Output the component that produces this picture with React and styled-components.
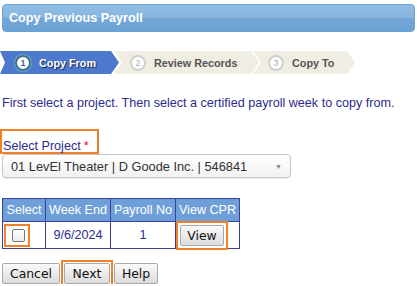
import React from "react";
import styled, { createGlobalStyle } from "styled-components";

const GlobalStyle = createGlobalStyle`
  body {
    margin: 0;
    background: #fff;
    font-family: "Liberation Sans", Arial, sans-serif;
  }
`;

const ORANGE = "#f0802a";
const NAVY = "#2c2c8e";

const Page = styled.div`
  padding: 4px 2px 0 2px;
`;

const Header = styled.div`
  height: 28px;
  box-sizing: border-box;
  display: flex;
  align-items: center;
  padding-left: 6px;
  border: 1px solid #6aa1d6;
  border-radius: 4px;
  background: linear-gradient(#91bde3 0%, #88b6df 48%, #74a7d7 52%, #6da2d4 100%);
  color: #fff;
  font-weight: bold;
  font-size: 12.6px;
`;

const Steps = styled.div`
  display: flex;
  height: 23px;
  margin: 19px 0 0 -2px;
`;

const Step = styled.div`
  width: ${p => p.$w}px;
  margin-left: ${p => p.$shift}px;
  display: flex;
  align-items: center;
  box-sizing: border-box;
  padding-left: ${p => p.$pad}px;
  gap: 8px;
  background: ${p => (p.$active ? "#4c79cd" : "#f0ede3")};
  clip-path: polygon(
    0 0,
    calc(100% - 8px) 0,
    100% 50%,
    calc(100% - 8px) 100%,
    0 100%,
    ${p => p.$notch}px 50%
  );
  font-size: 10.8px;
  font-weight: bold;
  color: ${p => (p.$active ? "#fff" : "#555")};
  text-shadow: ${p => (p.$active ? "1px 1px 1px #1d2b4d" : "none")};
`;

const Num = styled.span`
  width: 16px;
  height: 16px;
  box-sizing: border-box;
  border-radius: 50%;
  display: flex;
  align-items: center;
  justify-content: center;
  background: #fff;
  font-size: 9px;
  font-weight: ${p => (p.$active ? "bold" : "normal")};
  text-shadow: none;
  border: 2px solid ${p => (p.$active ? "#3f6f86" : "#cfcfcf")};
  color: ${p => (p.$active ? "#3a5cb8" : "#aaa")};
  box-shadow: ${p => (p.$active ? "0 0 2px #9fd" : "none")};
`;

const Intro = styled.p`
  margin: 22px 0 0;
  font-size: 12.6px;
  line-height: 15px;
  color: ${NAVY};
`;

const Label = styled.div`
  display: inline-block;
  margin: 18px 0 0 -2px;
  box-sizing: border-box;
  width: 99px;
  height: 25px;
  padding: 8px 0 0 1px;
  border: 2px solid ${ORANGE};
  font-size: 12.6px;
  line-height: 15px;
  color: ${NAVY};

  span {
    color: #e02020;
    margin-left: 3px;
  }
`;

const Dropdown = styled.div`
  width: 289px;
  height: 24px;
  box-sizing: border-box;
  display: flex;
  align-items: center;
  justify-content: space-between;
  padding: 0 8px 0 8px;
  border: 1px solid #c6c6c6;
  border-radius: 4px;
  background: linear-gradient(#fff, #f1f1f1);
  box-shadow: 0 1px 1px rgba(0, 0, 0, 0.08);
  font-size: 12.8px;
  color: #333;

  i {
    font-style: normal;
    font-size: 7px;
    color: #888;
  }
`;

const Table = styled.table`
  margin-top: 20px;
  border-collapse: collapse;
  border: 1px solid #3d3f9d;
  font-size: 12.6px;
`;

const Th = styled.th`
  width: ${p => p.$w}px;
  height: 22px;
  padding: 0;
  background: #6f9fd8;
  color: #fff;
  font-weight: normal;
  border: 1px solid #3d3f9d;
  border-left-color: #c8d8ee;
  &:first-child {
    border-left-color: #3d3f9d;
  }
`;

const Td = styled.td`
  height: 26px;
  padding: 0 0 0 ${p => p.$indent || 0}px;
  border: 1px solid #3d3f9d;
  color: ${NAVY};
  text-align: ${p => p.$align || "center"};
`;

// square orange box drawn around a control (no radius, so it stays square)
const Mark = styled.span`
  display: inline-flex;
  vertical-align: middle;
  outline: 2px solid ${ORANGE};
  outline-offset: ${p => p.$offset ?? 1}px;
`;

const CheckMark = styled.span`
  display: flex;
  width: 26px;
  height: 23px;
  box-sizing: border-box;
  align-items: center;
  padding-left: 6px;
  margin-left: 1px;
  border: 2px solid ${ORANGE};
`;

const Check = styled.input.attrs({ type: "checkbox" })`
  appearance: none;
  display: block;
  width: 13px;
  height: 13px;
  margin: 0;
  border: 1px solid #777;
  border-radius: 2px;
  background: linear-gradient(#fff, #ececec);
`;

const Button = styled.button`
  width: ${p => p.$w}px;
  height: 21px;
  margin: 0;
  padding: 0;
  border: 1px solid #a9a9a9;
  border-radius: 2px;
  background: linear-gradient(#fafafa, #dcdcdc);
  font-family: "DejaVu Sans", Verdana, sans-serif;
  font-size: 12.4px;
  color: #111;
`;

const Actions = styled.div`
  display: flex;
  align-items: center;
  gap: 4px;
  margin-top: 14px;
`;

export default function App() {
  return (
    <Page>
      <GlobalStyle />
      <Header>Copy Previous Payroll</Header>
      <Steps>
        <Step $active $w={119} $shift={0} $notch={5} $pad={15}>
          <Num $active>1</Num>Copy From
        </Step>
        <Step $w={145} $shift={-5} $notch={8} $pad={16}>
          <Num>2</Num>Review Records
        </Step>
        <Step $w={102} $shift={-6} $notch={8} $pad={15}>
          <Num>3</Num>Copy To
        </Step>
      </Steps>
      <Intro>First select a project. Then select a certified payroll week to copy from.</Intro>
      <Label>
        Select Project<span>*</span>
      </Label>
      <Dropdown>
        01 LevEl Theater | D Goode Inc. | 546841<i>▼</i>
      </Dropdown>
      <Table>
        <thead>
          <tr>
            <Th $w={42}>Select</Th>
            <Th $w={64}>Week End</Th>
            <Th $w={64}>Payroll No</Th>
            <Th $w={63}>View CPR</Th>
          </tr>
        </thead>
        <tbody>
          <tr>
            <Td $align="left">
              <CheckMark><Check /></CheckMark>
            </Td>
            <Td>9/6/2024</Td>
            <Td>1</Td>
            <Td $align="left" $indent={4}>
              <Mark $offset={2}><Button $w={44}>View</Button></Mark>
            </Td>
          </tr>
        </tbody>
      </Table>
      <Actions>
        <Button $w={58}>Cancel</Button>
        <Mark><Button $w={46}>Next</Button></Mark>
        <Button $w={44}>Help</Button>
      </Actions>
    </Page>
  );
}
